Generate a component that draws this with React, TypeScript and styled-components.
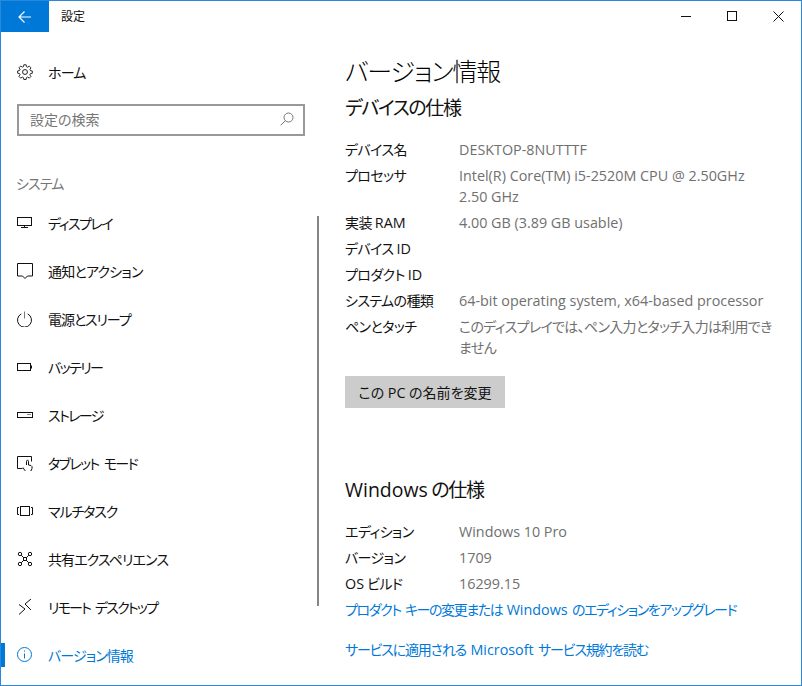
import React from "react";
import styled, { createGlobalStyle } from "styled-components";

const Global = createGlobalStyle`
  html, body { margin: 0; padding: 0; background: #fff; }
  * { box-sizing: border-box; }
`;

const Window = styled.div`
  position: relative;
  width: 802px;
  height: 686px;
  border: 1px solid #2b88d8;
  background: #fff;
  overflow: hidden;
  font-family: "Open Sans", "Noto Sans CJK JP", sans-serif;
  font-size: 14px;
  font-weight: 400;
  font-feature-settings: "palt";
  color: #111;
  display: flex;
  flex-direction: column;
`;

const Latin = styled.span`
  font-size: 1.025em;
  letter-spacing: 0;
`;

const TitleBar = styled.header`
  flex: none;
  height: 31px;
  display: flex;
  align-items: center;
`;

const BackButton = styled.div`
  width: 48px;
  height: 31px;
  background: #0078d7;
  display: flex;
  align-items: center;
  justify-content: center;
`;

const TitleText = styled.span`
  margin-left: 12px;
  padding-bottom: 1px;
  font-size: 12px;
  color: #111;
`;

const WindowControls = styled.div`
  margin-left: auto;
  display: flex;
`;

const ControlButton = styled.div`
  width: 46px;
  height: 31px;
  display: flex;
  align-items: center;
  justify-content: center;
`;

const Body = styled.div`
  flex: 1;
  min-height: 0;
  display: flex;
`;

const Sidebar = styled.nav`
  position: relative;
  flex: none;
  width: 320px;
  padding-top: 16px;
`;

const NavRow = styled.div<{ $active?: boolean; $spacing?: number }>`
  position: relative;
  height: 48px;
  padding-left: 16px;
  display: flex;
  align-items: center;
  gap: 15px;
  color: ${(p) => (p.$active ? "#0078d7" : "#111")};
  letter-spacing: ${(p) => p.$spacing ?? -0.8}px;
  word-spacing: 3px;
  white-space: nowrap;
`;

const ActiveMark = styled.span`
  position: absolute;
  left: 0;
  top: 12px;
  width: 4px;
  height: 24px;
  background: #0078d7;
`;

const IconSlot = styled.svg`
  flex: none;
  width: 16px;
  height: 16px;
  fill: none;
  stroke: currentColor;
  stroke-width: 1;
`;

const SearchBox = styled.div`
  margin: 8px 0 0 16px;
  width: 288px;
  height: 32px;
  border: 2px solid #999;
  padding: 0 9px 2px 11px;
  display: flex;
  align-items: center;
  justify-content: space-between;
  color: #767676;
`;

const SectionLabel = styled.div`
  margin: 31px 0 0 15px;
  height: 32px;
  color: #767676;
  letter-spacing: -0.9px;
  display: flex;
  align-items: center;
`;

const NavList = styled.div`
  display: flex;
  flex-direction: column;
`;

const Scrollbar = styled.div`
  position: absolute;
  left: 316px;
  top: 184px;
  width: 2px;
  height: 390px;
  background: #858585;
`;

const Main = styled.main`
  flex: 1;
  min-width: 0;
  padding: 19px 24px 0 24px;
`;

const PageTitle = styled.h1`
  margin: 0;
  font-size: 25px;
  line-height: 40px;
  font-weight: 300;
  letter-spacing: -1.1px;
  color: #000;
`;

const SectionTitle = styled.h2<{ $gap?: number }>`
  margin: ${(p) => p.$gap ?? 2}px 0 0;
  font-size: 19px;
  line-height: 30px;
  font-weight: 400;
  letter-spacing: -1.4px;
  color: #111;
`;

const SpecList = styled.dl<{ $top: number }>`
  margin: ${(p) => p.$top}px 0 0;
`;

const SpecRow = styled.div`
  display: grid;
  grid-template-columns: 114px 317px;
  padding-bottom: 5px;
`;

const SpecName = styled.dt`
  margin: 0;
  line-height: 21px;
  color: #111;
  letter-spacing: -0.6px;
`;

const SpecValue = styled.dd`
  margin: 0;
  line-height: 21px;
  color: #707070;
  letter-spacing: -0.7px;
`;

const RenameButton = styled.div`
  margin-top: 13px;
  width: 160px;
  height: 32px;
  background: #ccc;
  display: flex;
  align-items: center;
  justify-content: center;
  color: #111;
  white-space: pre;
`;

const LinkText = styled.a<{ $top: number; $spacing: number }>`
  display: block;
  margin-top: ${(p) => p.$top}px;
  line-height: 21px;
  color: #0078d7;
  letter-spacing: ${(p) => p.$spacing}px;
  word-spacing: 2px;
  white-space: nowrap;
`;

const Mixed = ({ text }: { text: string }) => (
  <>
    {text.split(/([\x21-\x7e]+(?: [\x21-\x7e]+)*)/).map((part, i) =>
      i % 2 === 1 ? <Latin key={i}>{part}</Latin> : part
    )}
  </>
);

const HomeIcon = () => (
  <IconSlot viewBox="0 0 17 17">
    <circle cx="8.5" cy="8.5" r="2.6" />
    <path d="M7.2.8h2.600l.4 2.100 1.300.6 1.800-1.200 1.900 1.900-1.200 1.800.6 1.300 2.100.4v2.600l-2.100.4-.6 1.300 1.200 1.800-1.900 1.900-1.800-1.200-1.300.6-.4 2.100H7.200l-.4-2.100-1.300-.6-1.800 1.200-1.900-1.900L3 11.900l-.6-1.300-2.100-.4V7.600l2.100-.4L3 5.900 1.800 4.100l1.900-1.900 1.800 1.200 1.300-.6z" transform="translate(.4 .1) scale(.95)" />
  </IconSlot>
);

const icons: Record<string, React.ReactNode> = {
  display: (
    <>
      <rect x=".5" y="2.500" width="14" height="8" />
      <path d="M7.500 10.500v2M4 12.500h7" />
    </>
  ),
  notify: <path d="M.5.500h15v12.500h-5L8 15.500 5.500 13H.5z" />,
  power: (
    <>
      <path d="M4.300 2.900a7 7 0 1 0 6.400 0" />
      <path d="M7.500.5v7" stroke="#777" />
    </>
  ),
  battery: (
    <>
      <rect x=".5" y="4.500" width="13" height="7" />
      <path d="M14.500 6.500v3" />
    </>
  ),
  storage: (
    <>
      <rect x=".5" y="5.500" width="15" height="5" />
      <path d="M10.500 7.500h1M12.500 7.500h1" />
    </>
  ),
  tablet: (
    <>
      <path d="M5.500 13.500h-5V1.500h14v5" />
      <path d="M9.500 10V6.300a1 1 0 0 1 2 0V10l2.500.5 1 1v2a4 4 0 0 1-7.500 1.500L6 12.500" />
    </>
  ),
  multi: (
    <>
      <rect x="3.500" y="3.500" width="9" height="9" />
      <path d="M2 4.500H.5v7H2M14 4.500h1.500v7H14" />
    </>
  ),
  share: (
    <>
      <circle cx="3" cy="3" r="1.700" />
      <circle cx="13" cy="3" r="1.700" />
      <circle cx="3" cy="13" r="1.700" />
      <circle cx="13" cy="13" r="1.700" />
      <rect x="6.500" y="6.500" width="3" height="3" />
      <path d="M4.200 4.200l2.300 2.300M11.800 4.200L9.500 6.500M4.200 11.800l2.300-2.300M11.800 11.800L9.500 9.500" />
    </>
  ),
  remote: <path d="M2 5.500L8 10l-6 5.500M14 0L8 5l6 6" />,
  info: (
    <>
      <circle cx="7.500" cy="7.500" r="7" />
      <path d="M7.500 6.500v5M7.500 3.500v1.200" />
    </>
  ),
};

const NavIcon = ({ name }: { name: string }) => <IconSlot viewBox="0 0 16 16">{icons[name]}</IconSlot>;

const navItems: { icon: string; label: string; active?: boolean; spacing?: number }[] = [
  { icon: "display", label: "ディスプレイ", spacing: -1.5 },
  { icon: "notify", label: "通知とアクション" },
  { icon: "power", label: "電源とスリープ", spacing: -1.1 },
  { icon: "battery", label: "バッテリー", spacing: -1.6 },
  { icon: "storage", label: "ストレージ", spacing: -1.6 },
  { icon: "tablet", label: "タブレット モード", spacing: -1.6 },
  { icon: "multi", label: "マルチタスク", spacing: -1.1 },
  { icon: "share", label: "共有エクスペリエンス", spacing: -0.9 },
  { icon: "remote", label: "リモート デスクトップ", spacing: -1.8 },
  { icon: "info", label: "バージョン情報", active: true, spacing: -0.9 },
];

const deviceSpecs = [
  ["デバイス名", "DESKTOP-8NUTTTF"],
  ["プロセッサ", "Intel(R) Core(TM) i5-2520M CPU @ 2.50GHz 2.50 GHz"],
  ["実装 RAM", "4.00 GB (3.89 GB usable)"],
  ["デバイス ID", ""],
  ["プロダクト ID", ""],
  ["システムの種類", "64-bit operating system, x64-based processor"],
  ["ペンとタッチ", "このディスプレイでは、ペン入力とタッチ入力は利用できません"],
];

const windowsSpecs = [
  ["エディション", "Windows 10 Pro"],
  ["バージョン", "1709"],
  ["OS ビルド", "16299.15"],
];

const Specs = ({ rows, top }: { rows: string[][]; top: number }) => (
  <SpecList $top={top}>
    {rows.map(([name, value]) => (
      <SpecRow key={name}>
        <SpecName>
          <Mixed text={name} />
        </SpecName>
        <SpecValue>
          <Mixed text={value} />
        </SpecValue>
      </SpecRow>
    ))}
  </SpecList>
);

export default function App() {
  return (
    <>
      <Global />
      <Window>
        <TitleBar>
          <BackButton>
            <svg width="14" height="14" viewBox="0 0 14 14" fill="none" stroke="#fff" strokeWidth="1.2">
              <path d="M1 7h12M6.500 1.500L1 7l5.500 5.500" />
            </svg>
          </BackButton>
          <TitleText>設定</TitleText>
          <WindowControls>
            <ControlButton>
              <svg width="11" height="11" viewBox="0 0 11 11" fill="none" stroke="#111">
                <path d="M0 5.500h10" />
              </svg>
            </ControlButton>
            <ControlButton>
              <svg width="11" height="11" viewBox="0 0 11 11" fill="none" stroke="#111">
                <rect x=".5" y=".5" width="9" height="9" />
              </svg>
            </ControlButton>
            <ControlButton>
              <svg width="11" height="11" viewBox="0 0 11 11" fill="none" stroke="#111">
                <path d="M.5.500l10 10M10.500.500l-10 10" />
              </svg>
            </ControlButton>
          </WindowControls>
        </TitleBar>
        <Body>
          <Sidebar>
            <NavRow>
              <HomeIcon />
              ホーム
            </NavRow>
            <SearchBox>
              設定の検索
              <svg width="14" height="14" viewBox="0 0 14 14" fill="none" stroke="#777">
                <circle cx="8.500" cy="5.500" r="4.500" />
                <path d="M5.300 8.700L.7 13.300" />
              </svg>
            </SearchBox>
            <SectionLabel>システム</SectionLabel>
            <NavList>
              {navItems.map((item) => (
                <NavRow key={item.label} $active={item.active} $spacing={item.spacing}>
                  {item.active && <ActiveMark />}
                  <NavIcon name={item.icon} />
                  {item.label}
                </NavRow>
              ))}
            </NavList>
            <Scrollbar />
          </Sidebar>
          <Main>
            <PageTitle>バージョン情報</PageTitle>
            <SectionTitle>デバイスの仕様</SectionTitle>
            <Specs rows={deviceSpecs} top={16} />
            <RenameButton>
              <Mixed text="この PC の名前を変更" />
            </RenameButton>
            <SectionTitle $gap={67}>
              <Mixed text="Windows の仕様" />
            </SectionTitle>
            <Specs rows={windowsSpecs} top={16} />
            <LinkText $top={0} $spacing={-1.4}>
              <Mixed text="プロダクト キーの変更または Windows のエディションをアップグレード" />
            </LinkText>
            <LinkText $top={19} $spacing={-1.2}>
              <Mixed text="サービスに適用される Microsoft サービス規約を読む" />
            </LinkText>
            <LinkText $top={21} $spacing={-0.95}>
              <Mixed text="Microsoft ソフトウェア ライセンス条項を読む" />
            </LinkText>
          </Main>
        </Body>
      </Window>
    </>
  );
}
